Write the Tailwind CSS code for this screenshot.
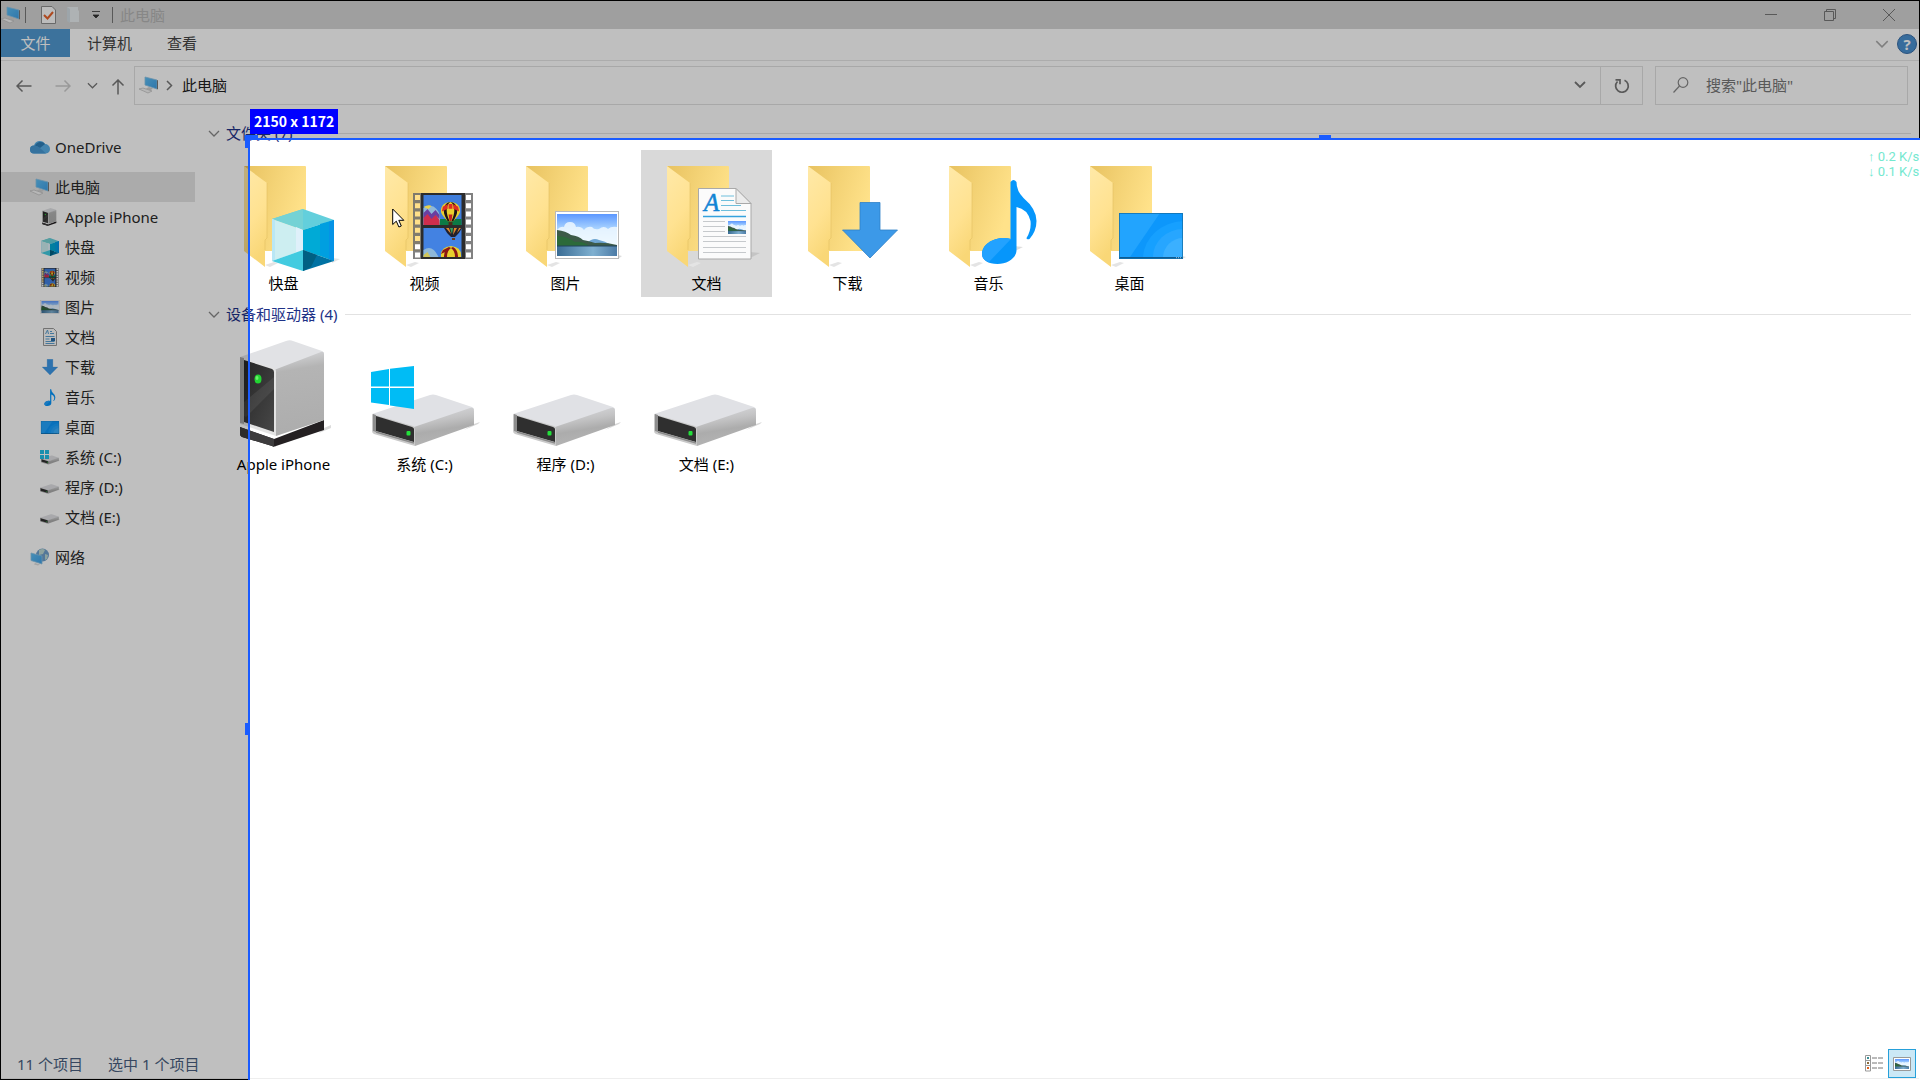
<!DOCTYPE html>
<html lang="zh-CN">
<head>
    <meta charset="UTF-8">
    <meta name="viewport" content="width=device-width, initial-scale=1.0">
    <title>此电脑</title>
    <script src="https://cdn.jsdelivr.net/npm/@tailwindcss/browser@4"></script>
</head>
<body class="bg-white text-black text-[15px] leading-[22px] font-['Noto_Sans','Noto_Sans_CJK_SC',sans-serif]">

    <!-- Icon sprite -->
    <svg class="absolute w-0 h-0" aria-hidden="true">
        <defs>
            <linearGradient id="gBack" x1="0" y1="0" x2="1" y2="0.4">
                <stop offset="0" stop-color="#e8c260"/><stop offset="0.5" stop-color="#f4d376"/><stop offset="1" stop-color="#ffe28a"/>
            </linearGradient>
            <linearGradient id="gFront" x1="0" y1="0" x2="0.3" y2="1">
                <stop offset="0" stop-color="#ffe9a8"/><stop offset="0.6" stop-color="#ffe291"/><stop offset="1" stop-color="#f9d777"/>
            </linearGradient>
            <linearGradient id="gSky" x1="0" y1="0" x2="0" y2="1">
                <stop offset="0" stop-color="#5b97ff"/><stop offset="0.35" stop-color="#a9d3ff"/><stop offset="0.7" stop-color="#e9f7ff"/>
            </linearGradient>
            <linearGradient id="gSea" x1="0" y1="0" x2="1" y2="0">
                <stop offset="0" stop-color="#3a6c94"/><stop offset="0.6" stop-color="#7fb0d0"/><stop offset="1" stop-color="#4c7ba6"/>
            </linearGradient>
            <linearGradient id="gSide" x1="0" y1="0" x2="0.25" y2="1">
                <stop offset="0" stop-color="#dcdde0"/><stop offset="0.4" stop-color="#c3c3c4"/><stop offset="0.65" stop-color="#acacac"/><stop offset="1" stop-color="#b4b4b4"/>
            </linearGradient>
            <linearGradient id="gTower" x1="0" y1="0" x2="0.1" y2="1">
                <stop offset="0" stop-color="#dcdde0"/><stop offset="0.25" stop-color="#b4b4b4"/><stop offset="1" stop-color="#adadad"/>
            </linearGradient>
            <linearGradient id="gDark" x1="0" y1="0" x2="1" y2="1">
                <stop offset="0" stop-color="#262626"/><stop offset="1" stop-color="#474747"/>
            </linearGradient>
            <linearGradient id="gScreen" x1="0" y1="0" x2="1" y2="1">
                <stop offset="0" stop-color="#5fc0f5"/><stop offset="1" stop-color="#3f9fe6"/>
            </linearGradient>
        </defs>

        <symbol id="folder" viewBox="0 0 68 102">
            <path d="M21 99l9-3 4 1-8 4z" fill="#e4e4e4"/>
            <path d="M0 0h61q1 0 1 1v83q0 1-1 1H8z" fill="url(#gBack)"/>
            <path d="M0 0l23 17v55l-2 2v27L0 85z" fill="url(#gFront)"/>
            <path d="M23 17v55l-2 2v10" fill="none" stroke="#e3bf62" stroke-width="0.6"/>
        </symbol>

        <symbol id="cube" viewBox="0 0 62 62">
            <path d="M31 0L62 11 31 21 0 10z" fill="#63cfdc"/>
            <path d="M31 0v21L0 10z" fill="#74d2d5"/>
            <path d="M0 10l31 11v20L0 52z" fill="#cdeef1"/>
            <path d="M24 18l7 3v20l-7 3z" fill="#dff0fa"/>
            <path d="M0 10l3 1v40l-3 1z" fill="#b9e7f5"/>
            <path d="M31 21l31-10v41L31 41z" fill="#00aad6"/>
            <path d="M48 15l14-4v41l-14-6z" fill="#009fe0"/>
            <path d="M57 13l5-2v41l-5-2z" fill="#0593e6"/>
            <path d="M0 52l31-11v21z" fill="#42cbe0"/>
            <path d="M31 41l31 11-31 10z" fill="#0072a3"/>
            <path d="M31 41l14 5-6 12-8 4z" fill="#006083"/>
        </symbol>

        <symbol id="balloon" viewBox="0 0 20 24">
            <path d="M10 0c6 0 10 4 10 9 0 4-4 7-7 11H7C4 16 0 13 0 9 0 4 4 0 10 0z" fill="#e8cf2e"/>
            <path d="M10 0C6 0 3 4 3 9c0 4 2 7 4 11h2C7 15 6 12 6 8c0-4 2-7 4-8zM10 0c4 0 7 4 7 9 0 4-2 7-4 11h-2c2-5 3-8 3-12 0-4-2-7-4-8z" fill="#1d1414"/>
            <path d="M2 5l5-3v5l-6 3zM18 5l-5-3v5l6 3zM8 2h4v5H8z" fill="#dc2d22"/>
            <path d="M8 13h4l-1 7H9z" fill="#c32020"/>
            <rect x="8" y="21" width="4" height="3" fill="#4b2b16"/>
        </symbol>

        <symbol id="film" viewBox="0 0 60 66">
            <rect width="60" height="66" fill="#6b6b6b" fill-opacity="0.85"/>
            <rect x="8" width="44" height="66" fill="#2c2c2c"/>
            <path d="M55.500 2v64M4.500 51.200v14" stroke="#fff" stroke-width="5" stroke-dasharray="5 3.200"/>
            <path d="M4.500 2v48" stroke="#ffe08a" stroke-width="5" stroke-dasharray="5 3.200"/>
            <rect x="10.500" y="2" width="38" height="30" fill="#3f7ddb"/>
            <rect x="10.500" y="35" width="38" height="29" fill="#4382e2"/>
            <rect x="24" y="26" width="24.500" height="6" fill="#0d7a45"/>
            <path d="M10.500 15q8-5 13 1 5 5 3 16h-16z" fill="#8fb8d8"/>
            <path d="M10.500 24l4-4 4 5 4-4 4 6v5h-16z" fill="#cf2e4d"/>
            <path d="M10.500 20l4-4 4 5 4-4 4 5v4l-4-4-4 4-4-5-4 4z" fill="#6a3fa0"/>
            <path d="M10.500 14q5-3 8-1l-3 3z" fill="#e5d14a"/>
            <use href="#balloon" x="27.500" y="9" width="20" height="23"/>
            <path d="M31 35h18q-3 6-7 9h-4q-4-3-7-9z" fill="#23202c"/>
            <path d="M33 35h3l2 6zM41 35h3l-4 7zM46 35h2l-4 5z" fill="#e0892c"/>
            <path d="M37 35h3l-1 6z" fill="#36a35c"/>
            <rect x="39" y="45" width="3" height="2" fill="#6b3b20"/>
            <path d="M10.500 57q9-6 15 7h-15z" fill="#8fb8d8"/>
            <path d="M10.500 62l4-3 3 5h-7z" fill="#cfc55a"/>
            <path d="M28 64q-1-10 10-11 11 1 10 11z" fill="#e8cf2e"/>
            <path d="M31 64q0-7 5-10l2 1q-4 3-4 9zM45 64q0-7-5-10l-2 1q4 3 4 9zM30 57l6-3-2 4-6 3z" fill="#8c1614"/>
        </symbol>

        <symbol id="photo" viewBox="0 0 60 42" preserveAspectRatio="none">
            <rect width="60" height="42" fill="url(#gSky)"/>
            <path d="M0 16q3-4 7-3 1-5 6-5t6 5q5-1 8 3 3-4 8-3 2 3 7 2 5-4 9 0 3-3 9-2v20H0z" fill="#eef8ff" fill-opacity="0.85"/>
            <path d="M30 29q6-6 12-3 6 1 12 5H28z" fill="#6ea5d2"/>
            <path d="M0 16q9 1 14 5 8 1 12 5 6 1 12 3 10-1 22 2v2H0z" fill="#3c5a48"/>
            <path d="M0 22q10 0 18 6 8-1 14 4H0z" fill="#2c6a3a"/>
            <rect y="32" width="60" height="10" fill="url(#gSea)"/>
            <path d="M0 32h60" stroke="#22445a" stroke-width="1"/>
        </symbol>

        <symbol id="picture" viewBox="0 0 64 48">
            <rect x="0.500" y="0.500" width="63" height="47" fill="#fff" stroke="#b9b9b9"/>
            <use href="#photo" x="2" y="3" width="60" height="42"/>
        </symbol>

        <symbol id="document" viewBox="0 0 54 72">
            <path d="M0.500 0.500H38l15 15v55.500H0.500z" fill="#fbfbfb" stroke="#a9a9a9"/>
            <path d="M38 0.500v15h15z" fill="#ececec" stroke="#a9a9a9"/>
            <text x="6" y="23" font-family="Liberation Serif" font-style="italic" font-size="25" fill="#1284d4" stroke="#1284d4" stroke-width="0.500">A</text>
            <path d="M23 8h13M23 12.500h13M23 17.500h20M23 22.500h25" stroke="#6fbfdc"/>
            <path d="M5 28.500h43" stroke="#35a2dd" stroke-width="1.500"/>
            <path d="M5 33.500h22M5 38.500h22M5 43.500h22M5 48.500h43M5 53.500h43M5 59.500h43M5 64.500h43" stroke="#c6c9cc"/>
            <use href="#photo" x="30" y="33" width="18" height="13"/>
        </symbol>

        <symbol id="download" viewBox="0 0 56 56">
            <path d="M18 0.500h20V28h17.500L28 56 0.500 28H18z" fill="#3c99e8" stroke="#2f80c8" stroke-width="0.800"/>
        </symbol>

        <symbol id="music" viewBox="0 0 56 84">
            <path d="M28.500 2q3-4 6 0 0 9 7 16 13 11 13 23 0 10-7 18-3 1-3-1 5-8 4-17-3-12-14-14v43c0 8-9 14-19 14C6 84 0 80 0 74c0-9 10-16 22-16q4 0 6.500 1z" fill="#0696fb"/>
            <path d="M0 74c0-9 10-16 22-16q4 0 7 1L7 82q-7-2-7-8z" fill="#22a2ff"/>
        </symbol>

        <symbol id="desktop" viewBox="0 0 64 46">
            <rect width="64" height="46" fill="#0d97fb"/>
            <path d="M0 0h41L11 44H0z" fill="#22a4fe"/>
            <path d="M64 8A42 38 0 0 0 24 44h40z" fill="#16a0ff"/>
            <path d="M64 16A30 28 0 0 0 34 44h30z" fill="#27a6ff"/>
            <path d="M64 25A20 20 0 0 0 44 44h20z" fill="#3bb0ff"/>
            <path d="M0 44h64v2H0z" fill="#0e5c93"/>
            <path d="M57 45h5" stroke="#fff" stroke-dasharray="1 1"/>
            <rect x="0.500" y="0.500" width="63" height="45" fill="none" stroke="#1572ad" stroke-width="0.800"/>
        </symbol>

        <symbol id="tower" viewBox="0 0 92 108">
            <path d="M84 88l7-3v3l-12 5z" fill="#dcdcdc"/>
            <path d="M0 87l34 12 50-19v10L36 106q-2 1-4 0L2 97q-2-1-2-3z" fill="#242022"/>
            <path d="M0 87l34 12v8l-2-1L2 97q-2-1-2-3z" fill="#3d3c3d"/>
            <path d="M0 17L46 1q4-1.500 7 0l29 10q2 1 2 3L35 31z" fill="#e1e2e5"/>
            <path d="M34 30l47-18q3-1 3 2v66L36 96z" fill="url(#gTower)"/>
            <path d="M0 17l34 11q2 1 2 3v65L0 84z" fill="#e3e3e3"/>
            <path d="M0 17l4 1v66l-4-1z" fill="#a3a3a3"/>
            <path d="M4 20l28 9q2 1 2 3v60L4 82z" fill="url(#gDark)"/>
            <path d="M4 62l30-25v12L6 77l-2-1z" fill="#fff" fill-opacity="0.07"/>
            <ellipse cx="18" cy="39" rx="3.500" ry="4.500" fill="#22d532"/>
            <ellipse cx="17" cy="38" rx="1.500" ry="2" fill="#6cf06c"/>
        </symbol>

        <symbol id="drive" viewBox="0 0 108 53">
            <path d="M102 30l6-2-2 2-14 6z" fill="#d8d8d8"/>
            <path d="M0 20L58 1q3-1 6 0l36 12q2 1 2 3L43 34z" fill="#e0e1e5"/>
            <path d="M42 33l56-19q4-1 4 3v14L43 52z" fill="url(#gSide)"/>
            <path d="M0 20l41 12q2 1 2 3v17L2 40q-2-1-2-3z" fill="#c9c9c9"/>
            <path d="M1 20l3 1v17l-3-1z" fill="#8d8d8d"/>
            <path d="M4 22l36 11q2 1 2 2v13L4 37z" fill="#2f2f2f"/>
            <path d="M4 38l38 11" stroke="#8a8a8a" stroke-width="1.500"/>
            <rect x="34.500" y="37" width="4" height="4.500" rx="1" fill="#22e03a"/>
        </symbol>

        <symbol id="winlogo" viewBox="0 0 43 43">
            <path d="M0 6l18-3v17.500H0zM19 2.800L43 0v20.500H19zM0 22h18v17L0 36.500zM19 22h24v21l-24-3.500z" fill="#00bcf5"/>
        </symbol>

        <symbol id="sysdrive" viewBox="0 0 20 18">
            <use href="#drive" x="1" y="7" width="19" height="10"/>
            <path d="M0 2h4v4H0zM5 2h4v4H5zM0 7h4v4H0zM5 7h4v4H5z" fill="#22bfe8"/>
        </symbol>

        <symbol id="pc" viewBox="0 0 20 18">
            <path d="M6 1l12 3v9L6 9z" fill="url(#gScreen)" stroke="#8cc3e4" stroke-width="0.800"/>
            <path d="M18 4l1 .5v9l-1-.5z" fill="#777"/>
            <path d="M10 11l4 1.500-3 2-4-2z" fill="#d0d0d0"/>
            <path d="M0 13l4-1 9 3-4 2z" fill="#f4f4f4" stroke="#bbb" stroke-width="0.700"/>
        </symbol>

        <symbol id="cloud" viewBox="0 0 20 14">
            <path d="M4 13.500a4 4 0 0 1 0-8 6 6 0 0 1 11-1.500 5 5 0 0 1 5 5 4.500 4.500 0 0 1-4 4.500z" fill="#5ab0e8"/>
            <path d="M5 5.500a6 6 0 0 1 10-1.500l-5 4z" fill="#2f7fb8"/>
            <path d="M4 13.500a4 4 0 0 1 0-8q4 0 6 2.500l6 5.500z" fill="#4798d3"/>
        </symbol>

        <symbol id="network" viewBox="0 0 20 18">
            <circle cx="12.500" cy="7" r="6.500" fill="#6f9fcc"/>
            <path d="M9 2q4-2 6 0l-2 4-4 1zM15 6l3 1-1 4-2 1z" fill="#bcd9d3"/>
            <path d="M1 5l11 3v8L1 12.500z" fill="url(#gScreen)" stroke="#8cc3e4" stroke-width="0.800"/>
            <path d="M5 15l5 1.500-2 1-4-1z" fill="#ddd"/>
        </symbol>

        <symbol id="down" viewBox="0 0 12 7">
            <path d="M1 1l5 5 5-5" fill="none" stroke="currentColor" stroke-width="1.300"/>
        </symbol>
    </svg>

    <div class="relative min-h-screen flex flex-col overflow-hidden p-px">

        <!-- Title bar -->
        <header class="h-7 flex items-center bg-[#d5d5d5] shrink-0">
            <svg class="w-5 h-[18px]"><use href="#pc"/></svg>
            <span class="w-px h-4 ml-1 bg-[#777]"></span>
            <button class="ml-[15px]" aria-label="属性">
                <svg class="block w-[15px] h-[18px]" viewBox="0 0 15 18">
                    <path d="M.5.500H11l3.500 3.500v13.500H.5z" fill="#fbfbfb" stroke="#8c8c8c"/>
                    <path d="M3 9l3.500 3.500L12 6" fill="none" stroke="#e8622a" stroke-width="2"/>
                </svg>
            </button>
            <button class="ml-[10px]" aria-label="新建文件夹">
                <svg class="block w-[14px] h-[18px]" viewBox="0 0 14 18">
                    <path d="M1 1h11v3l1 1v11H3z" fill="#e8eef0"/><path d="M1 1l3 2v14l-3-2z" fill="#d2dde3"/>
                </svg>
            </button>
            <button class="ml-3" aria-label="自定义快速访问工具栏">
                <svg class="block w-2 h-2" viewBox="0 0 8 8"><path d="M0 .500h8M1 4h6L4 7z" fill="#333" stroke="#333" stroke-width="0.800"/></svg>
            </button>
            <span class="w-px h-4 ml-3 bg-[#777]"></span>
            <h1 class="ml-[7px] text-[#b4b4b4]">此电脑</h1>
            <div class="ml-auto flex h-full items-center pr-px text-[#777]">
                <button class="w-[59px] grid place-items-center" aria-label="最小化"><svg class="w-3 h-3" viewBox="0 0 12 12"><path d="M0 5.500h12" stroke="currentColor"/></svg></button>
                <button class="w-[59px] grid place-items-center" aria-label="还原"><svg class="w-3 h-3" viewBox="0 0 12 12" fill="none" stroke="currentColor"><path d="M.5 2.500h9v9h-9zM2.500 2.500v-2h9v9h-2"/></svg></button>
                <button class="w-[59px] grid place-items-center" aria-label="关闭"><svg class="w-3 h-3" viewBox="0 0 12 12"><path d="M0 0l12 12M12 0L0 12" stroke="currentColor"/></svg></button>
            </div>
        </header>

        <!-- Ribbon tabs -->
        <nav class="h-8 flex items-start border-b border-[#e6e6e6] text-[#444] shrink-0">
            <button class="w-[69px] h-7 bg-[#5199d0] text-white">文件</button>
            <button class="w-[79px] h-7">计算机</button>
            <button class="w-[66px] h-7">查看</button>
            <div class="ml-auto flex h-[30px] items-center gap-2 pr-[2px]">
                <button class="text-[#aaa]" aria-label="展开功能区"><svg class="block w-[14px] h-2"><use href="#down"/></svg></button>
                <button class="w-5 h-5 rounded-full bg-[#4a90d0] border border-[#3a6ea8] text-white font-bold leading-[18px]" aria-label="帮助">?</button>
            </div>
        </nav>

        <!-- Navigation and address bar -->
        <div class="flex items-center pt-[5px] pr-[11px] text-[#777] shrink-0">
            <div class="w-[133px] flex items-center pl-[15px]">
                <button aria-label="后退"><svg class="block w-4 h-4" viewBox="0 0 16 16" fill="none" stroke="currentColor" stroke-width="1.500"><path d="M15.500 8H1M6.500 2.500L1 8l5.500 5.500"/></svg></button>
                <button class="ml-[23px] text-[#ccc]" aria-label="前进"><svg class="block w-4 h-4" viewBox="0 0 16 16" fill="none" stroke="currentColor" stroke-width="1.500"><path d="M.5 8H15M9.500 2.500L15 8l-5.500 5.500"/></svg></button>
                <button class="ml-4" aria-label="最近浏览的位置"><svg class="block w-[11px] h-[7px]"><use href="#down"/></svg></button>
                <button class="ml-3 mt-[2px]" aria-label="向上"><svg class="block w-4 h-4" viewBox="0 0 16 16" fill="none" stroke="currentColor" stroke-width="1.500"><path d="M8 15.500V1M2.500 6.500L8 1l5.500 5.500"/></svg></button>
            </div>
            <div class="flex-1 h-[39px] flex items-center pb-px border border-[#e0e0e0]">
                <svg class="w-5 h-[18px] ml-1"><use href="#pc"/></svg>
                <svg class="w-[7px] h-[11px] ml-[7px]" viewBox="0 0 7 11"><path d="M1 1l4.500 4.500L1 10" fill="none" stroke="currentColor" stroke-width="1.500"/></svg>
                <button class="ml-[9px] text-[#222]">此电脑</button>
                <button class="ml-auto mr-[14px]" aria-label="以前的位置"><svg class="block w-3 h-2" viewBox="0 0 12 8"><path d="M1 1l5 5 5-5" fill="none" stroke="currentColor" stroke-width="1.800"/></svg></button>
                <button class="w-[42px] h-[37px] -mb-px border-l border-[#e0e0e0] grid place-items-center" aria-label="刷新">
                    <svg class="w-4 h-4" viewBox="0 0 16 16" fill="none" stroke="currentColor" stroke-width="1.700"><path d="M10.500 2.200A6.300 6.300 0 1 1 3.500 3.500M1.500 1.800h4.500v4.500"/></svg>
                </button>
            </div>
            <label class="ml-3 w-[253px] h-[39px] flex items-center pb-px border border-[#e0e0e0]">
                <svg class="w-4 h-4 ml-[17px] shrink-0" viewBox="0 0 16 16" fill="none" stroke="#888" stroke-width="1.200"><circle cx="10" cy="5.500" r="4.800"/><path d="M6.500 9L.5 15.500"/></svg>
                <input type="text" aria-label="搜索" placeholder='搜索"此电脑"' class="ml-[17px] w-full min-w-0 outline-none placeholder:text-[#777]">
            </label>
        </div>

        <main class="flex-1 flex">
            <!-- Navigation pane -->
            <aside class="w-[204px] shrink-0 pt-[27px] pr-[10px] text-[#2a2a2a]">
                <a href="#" class="h-[30px] flex items-center gap-[5px] pl-[29px]"><svg class="w-5 h-[14px]"><use href="#cloud"/></svg>OneDrive</a>
                <a href="#" class="h-[30px] mt-[10px] flex items-center gap-[5px] pl-[29px] bg-[#e4e4e4]"><svg class="w-5 h-[18px]"><use href="#pc"/></svg>此电脑</a>
                <ul>
                    <li><a href="#" class="h-[30px] flex items-center gap-[5px] pl-[39px]"><svg class="w-5 h-[18px]"><use href="#tower"/></svg>Apple iPhone</a></li>
                    <li><a href="#" class="h-[30px] flex items-center gap-[5px] pl-[39px]"><svg class="w-5 h-[18px]"><use href="#cube"/></svg>快盘</a></li>
                    <li><a href="#" class="h-[30px] flex items-center gap-[5px] pl-[39px]"><svg class="w-5 h-[19px]"><use href="#film"/></svg>视频</a></li>
                    <li><a href="#" class="h-[30px] flex items-center gap-[5px] pl-[39px]"><svg class="w-5 h-[14px]"><use href="#picture"/></svg>图片</a></li>
                    <li><a href="#" class="h-[30px] flex items-center gap-[5px] pl-[39px]">
                        <svg class="w-5 h-[18px]" viewBox="0 0 20 18" fill="none"><path d="M3.500.500h10l3 3v14h-13z" fill="#fafafa" stroke="#999"/><path d="M5.500 6l2-4 1 4M10 3.500h2M10 5.500h4M5.500 8.500h9M5.500 13.500h9M5.500 15.500h9M5.500 11h4" stroke="#5b9fd0"/><path d="M11 10h4v3h-4z" fill="#2c6ea8"/></svg>文档</a></li>
                    <li><a href="#" class="h-[30px] flex items-center gap-[5px] pl-[39px]"><svg class="w-5 h-4"><use href="#download"/></svg>下载</a></li>
                    <li><a href="#" class="h-[30px] flex items-center gap-[5px] pl-[39px]"><svg class="w-5 h-[17px]"><use href="#music"/></svg>音乐</a></li>
                    <li><a href="#" class="h-[30px] flex items-center gap-[5px] pl-[39px]"><svg class="w-5 h-[13px]"><use href="#desktop"/></svg>桌面</a></li>
                    <li><a href="#" class="h-[30px] flex items-center gap-[5px] pl-[39px]"><svg class="w-5 h-[18px]"><use href="#sysdrive"/></svg>系统 (C:)</a></li>
                    <li><a href="#" class="h-[30px] flex items-center gap-[5px] pl-[39px]"><svg class="w-5 h-[10px] mt-1"><use href="#drive"/></svg>程序 (D:)</a></li>
                    <li><a href="#" class="h-[30px] flex items-center gap-[5px] pl-[39px]"><svg class="w-5 h-[10px] mt-1"><use href="#drive"/></svg>文档 (E:)</a></li>
                </ul>
                <a href="#" class="h-[30px] mt-[10px] flex items-center gap-[5px] pl-[29px]"><svg class="w-5 h-[18px]"><use href="#network"/></svg>网络</a>
            </aside>

            <!-- Content pane -->
            <section class="flex-1 min-w-0 pt-3 pr-2">
                <h2 class="h-8 mb-px flex items-center pl-[3px] text-[#1e3287]">
                    <svg class="w-3 h-[7px] text-[#888]"><use href="#down"/></svg>
                    <span class="ml-[6px]">文件夹 (7)</span>
                    <span class="flex-1 h-px ml-2 bg-[#e2e2e2]"></span>
                </h2>
                <ul class="flex flex-wrap gap-x-[10px] pl-[13px] text-center">
                    <li class="w-[131px] h-[147px]">
                        <svg class="block w-full h-[122px]" viewBox="0 0 131 122"><use href="#folder" x="26" y="16" width="68" height="102"/><path d="M114 108l8 1-8 4z" fill="#e4e4e4"/><use href="#cube" x="54" y="59" width="62" height="62"/></svg>
                        <span class="block">快盘</span>
                    </li>
                    <li class="w-[131px] h-[147px]">
                        <svg class="block w-full h-[122px]" viewBox="0 0 131 122"><use href="#folder" x="26" y="16" width="68" height="102"/><use href="#film" x="54" y="43" width="60" height="66"/></svg>
                        <span class="block">视频</span>
                    </li>
                    <li class="w-[131px] h-[147px]">
                        <svg class="block w-full h-[122px]" viewBox="0 0 131 122"><use href="#folder" x="26" y="16" width="68" height="102"/><path d="M118 105l4 1-4 3z" fill="#ddd"/><use href="#picture" x="55" y="61" width="64" height="48"/></svg>
                        <span class="block">图片</span>
                    </li>
                    <li class="w-[131px] h-[147px] bg-[#d9d9d9]">
                        <svg class="block w-full h-[122px]" viewBox="0 0 131 122"><use href="#folder" x="26" y="16" width="68" height="102"/><path d="M109 102l10 1-10 5z" fill="#c4c4c4"/><use href="#document" x="57" y="38" width="54" height="72"/></svg>
                        <span class="block">文档</span>
                    </li>
                    <li class="w-[131px] h-[147px]">
                        <svg class="block w-full h-[122px]" viewBox="0 0 131 122"><use href="#folder" x="26" y="16" width="68" height="102"/><use href="#download" x="60" y="52" width="56" height="56"/></svg>
                        <span class="block">下载</span>
                    </li>
                    <li class="w-[131px] h-[147px]">
                        <svg class="block w-full h-[122px]" viewBox="0 0 131 122"><use href="#folder" x="26" y="16" width="68" height="102"/><path d="M92 96l8 1-8 4z" fill="#ddd"/><use href="#music" x="59" y="30" width="56" height="84"/></svg>
                        <span class="block">音乐</span>
                    </li>
                    <li class="w-[131px] h-[147px]">
                        <svg class="block w-full h-[122px]" viewBox="0 0 131 122"><use href="#folder" x="26" y="16" width="68" height="102"/><path d="M118 106l4 1-4 2z" fill="#ddd"/><use href="#desktop" x="55" y="63" width="64" height="46"/></svg>
                        <span class="block">桌面</span>
                    </li>
                </ul>

                <h2 class="h-8 my-px flex items-center pl-[3px] text-[#1e3287]">
                    <svg class="w-3 h-[7px] text-[#888]"><use href="#down"/></svg>
                    <span class="ml-[6px]">设备和驱动器 (4)</span>
                    <span class="flex-1 h-px ml-2 bg-[#e2e2e2]"></span>
                </h2>
                <ul class="flex flex-wrap gap-x-[10px] pl-[13px] text-center">
                    <li class="w-[131px] h-[147px]">
                        <svg class="block w-full h-[122px]" viewBox="0 0 131 122"><use href="#tower" x="22" y="9" width="92" height="108"/></svg>
                        <span class="block">Apple iPhone</span>
                    </li>
                    <li class="w-[131px] h-[147px]">
                        <svg class="block w-full h-[122px]" viewBox="0 0 131 122"><use href="#drive" x="13" y="63" width="108" height="53"/><use href="#winlogo" x="12" y="35" width="43" height="43"/></svg>
                        <span class="block">系统 (C:)</span>
                    </li>
                    <li class="w-[131px] h-[147px]">
                        <svg class="block w-full h-[122px]" viewBox="0 0 131 122"><use href="#drive" x="13" y="63" width="108" height="53"/></svg>
                        <span class="block">程序 (D:)</span>
                    </li>
                    <li class="w-[131px] h-[147px]">
                        <svg class="block w-full h-[122px]" viewBox="0 0 131 122"><use href="#drive" x="13" y="63" width="108" height="53"/></svg>
                        <span class="block">文档 (E:)</span>
                    </li>
                </ul>
            </section>
        </main>

        <!-- Status bar -->
        <footer class="h-[30px] flex items-center gap-[25px] pl-4 pr-[3px] border-b border-[#eee] text-[#4a5f80] shrink-0">
            <span>11 个项目</span>
            <span>选中 1 个项目</span>
            <div class="ml-auto flex items-center gap-1">
                <button aria-label="详细信息">
                    <svg class="block w-5 h-[17px]" viewBox="0 0 20 17" fill="none">
                        <path d="M1.500.500h5v15.500h-5zM1.500 5.500h5M1.500 10.500h5" stroke="#999"/>
                        <path d="M3 2h2v2H3z" fill="#3a8f95"/><path d="M3 7h2v2H3z" fill="#8a6a3a"/><path d="M3 12h2v2H3z" fill="#e0601a"/>
                        <path d="M8 3h5M14 3h5M8 8h5M14 8h5M8 13h5M14 13h5" stroke="#777"/>
                    </svg>
                </button>
                <button class="w-7 h-[29px] grid place-items-center bg-[#cbe8f6] border border-[#26a0da]" aria-label="大缩略图">
                    <svg class="w-[18px] h-[14px]" viewBox="0 0 18 14"><path d="M.5.500h17v13H.5z" fill="#fff" stroke="#999"/><use href="#photo" x="2" y="2" width="14" height="10"/></svg>
                </button>
            </div>
        </footer>

        <!-- Capture overlay: dimmed strips round the selected region -->
        <div class="absolute inset-0 grid grid-cols-[248px_1fr] grid-rows-[138px_1fr] pointer-events-none">
            <div class="col-span-2 bg-black/25 border-t border-x border-black"></div>
            <div class="bg-black/25 border-l border-b border-black"></div>
            <div class="relative border-l-2 border-t-2 border-[#1a5cff]">
                <span class="absolute -left-[5px] -top-[5px] w-[13px] h-[3px] bg-[#1a5cff]"></span>
                <span class="absolute -left-[5px] -top-[5px] w-[3px] h-[13px] bg-[#1a5cff]"></span>
                <span class="absolute left-[64%] -top-[5px] w-3 h-[3px] bg-[#1a5cff]"></span>
                <span class="absolute -left-[5px] top-[62%] w-[3px] h-3 bg-[#1a5cff]"></span>
                <span class="absolute left-0 -top-[31px] h-[25px] px-1 bg-[#0000ff] text-white text-[14px] font-bold leading-[25px] whitespace-nowrap font-['Noto_Sans_CJK_SC',sans-serif]">2150 x 1172</span>
            </div>
        </div>

        <!-- Network speed -->
        <div class="absolute right-0 top-[149px] w-[52px] text-[13px] leading-[15px] text-[#74e8cf] whitespace-nowrap font-['Roboto','Liberation_Sans',sans-serif]">
            <p>↑ 0.2 K/s</p>
            <p>↓ 0.1 K/s</p>
        </div>

        <!-- Mouse pointer -->
        <svg class="absolute left-[392px] top-[208px] w-[13px] h-5" viewBox="0 0 13 20">
            <path d="M.7 1v15.500l3.600-3.300 2.600 5.800 2.400-1-2.500-5.700h5z" fill="#fff" stroke="#000"/>
        </svg>
    </div>
</body>
</html>
